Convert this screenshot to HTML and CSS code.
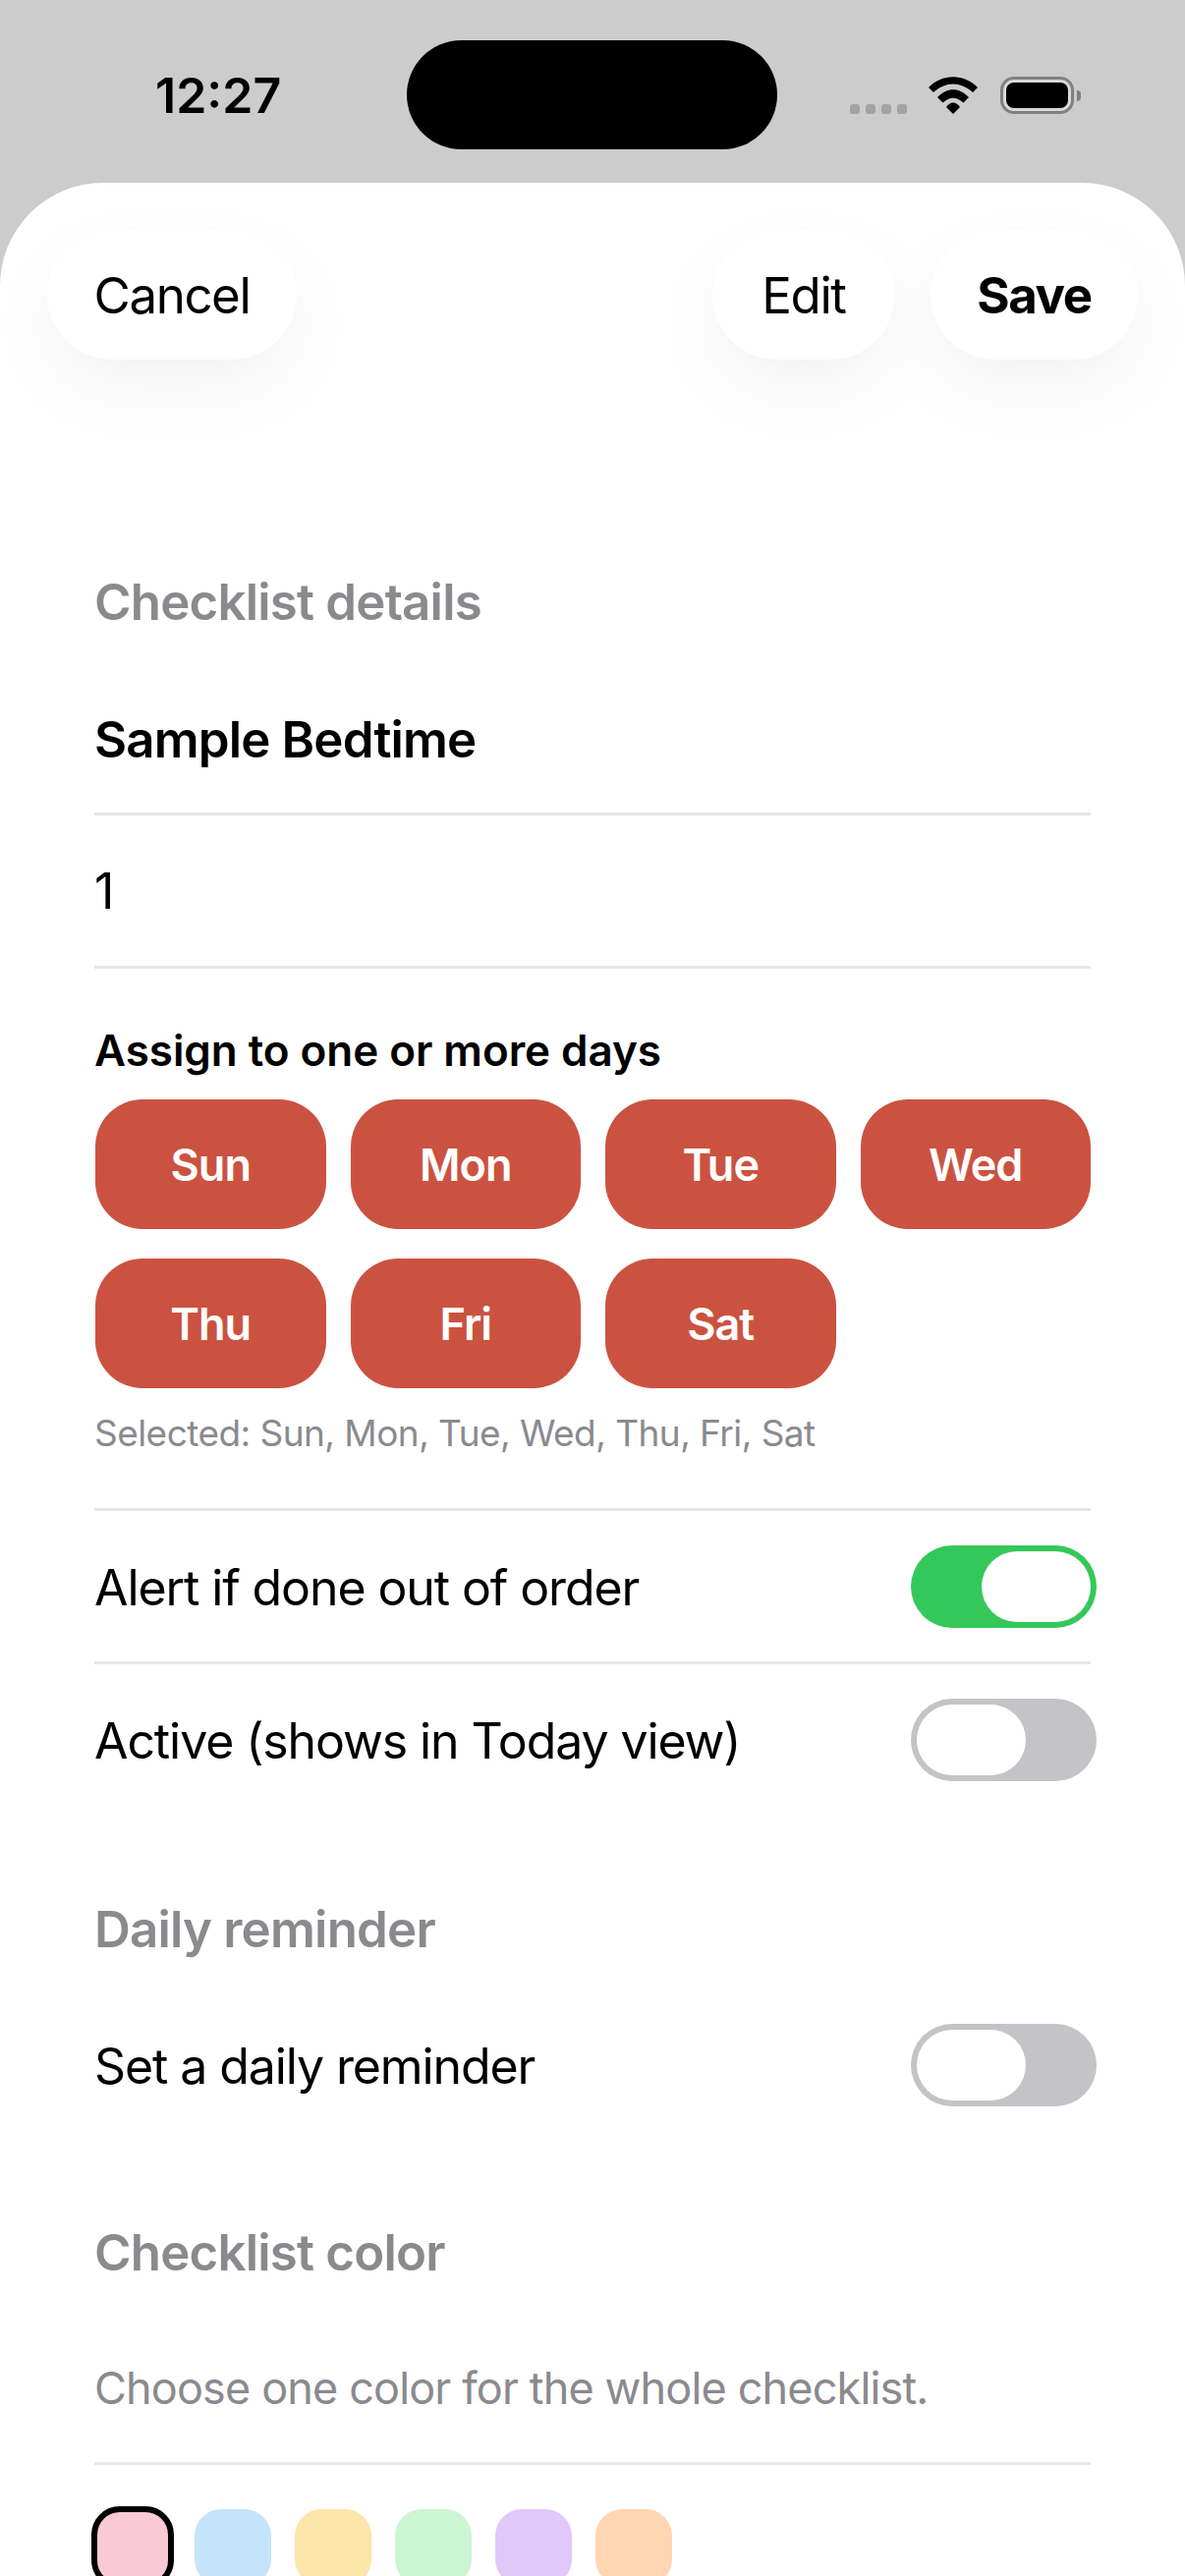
FILE: index.html
```html
<!DOCTYPE html>
<html lang="en">
<head>
    <meta charset="UTF-8">
    <meta name="viewport" content="width=device-width, initial-scale=1.0">
    <title>Checklist details</title>
    <link rel="stylesheet" href="styles.css">
</head>
<body>
    <header class="status">
        <span class="time">12:27</span>
        <div class="island"></div>
        <div class="status-icons">
            <div class="signal"><i></i><i></i><i></i><i></i></div>
            <svg class="wifi" width="50" height="38" viewBox="0 0 50 38">
                <path d="M0 11C14-3.5 36-3.5 50 11L45 16C32 4.500 18 4.500 5 16Z"/>
                <path d="M9 21C19 10.500 31 10.500 41 21L35.500 26.500C28 20 22 20 14.500 26.500Z"/>
                <path d="M18 31C22 25 28 25 32 31L25 38Z"/>
            </svg>
            <div class="battery"><div class="battery-fill"></div></div>
            <div class="battery-nub"></div>
        </div>
    </header>

    <main class="sheet">
        <nav class="toolbar">
            <a class="pill pill-cancel">Cancel</a>
            <a class="pill pill-edit">Edit</a>
            <a class="pill pill-save">Save</a>
        </nav>

        <div class="content">
            <h2 class="section-title first">Checklist details</h2>
            <div class="row row-name">Sample Bedtime</div>
            <div class="row">1</div>

            <h3 class="days-label">Assign to one or more days</h3>
            <div class="days">
                <button class="day">Sun</button>
                <button class="day">Mon</button>
                <button class="day">Tue</button>
                <button class="day">Wed</button>
                <button class="day">Thu</button>
                <button class="day">Fri</button>
                <button class="day">Sat</button>
            </div>
            <p class="days-note">Selected: Sun, Mon, Tue, Wed, Thu, Fri, Sat</p>

            <div class="row row-toggle">
                <span class="row-text">Alert if done out of order</span>
                <div class="toggle on"><div class="knob"></div></div>
            </div>
            <div class="row row-toggle row-last">
                <span class="row-text">Active (shows in Today view)</span>
                <div class="toggle"><div class="knob"></div></div>
            </div>

            <h2 class="section-title">Daily reminder</h2>
            <div class="row row-toggle row-last row-reminder">
                <span class="row-text">Set a daily reminder</span>
                <div class="toggle"><div class="knob"></div></div>
            </div>

            <h2 class="section-title section-color">Checklist color</h2>
            <div class="row row-hint">Choose one color for the whole checklist.</div>

            <div class="swatches">
                <div class="swatch selected pink"></div>
                <div class="swatch blue"></div>
                <div class="swatch yellow"></div>
                <div class="swatch green"></div>
                <div class="swatch purple"></div>
                <div class="swatch orange"></div>
            </div>
        </div>
    </main>
</body>
</html>
```
FILE: styles.css
```css
* {
    margin: 0;
    padding: 0;
    box-sizing: border-box;
}

html, body {
    height: 2622px;
    overflow: hidden;
}

body {
    background: #cccccc;
    font-family: Inter, "Noto Sans", sans-serif;
    color: #000;
}

/* status bar */
.status {
    height: 186px;
    display: flex;
    align-items: flex-start;
    padding: 41px 0 0 158px;
}

.time {
    width: 256px;
    margin-top: 28px;
    font-size: 50px;
    line-height: 56px;
    font-weight: 600;
}

.island {
    width: 377px;
    height: 111px;
    background: #000;
    border-radius: 56px;
}

.status-icons {
    margin-top: 37px;
    margin-left: 74px;
    height: 38px;
    display: flex;
    align-items: flex-end;
}

.signal {
    display: flex;
    gap: 6px;
}

.signal i {
    width: 10px;
    height: 10px;
    border-radius: 3px;
    background: #a3a3a3;
}

.wifi {
    margin-left: 22px;
}

.battery {
    margin-left: 23px;
    width: 75px;
    height: 38px;
    padding: 3px;
    border: 3px solid #808080;
    border-radius: 14px;
    background: #d9d9d9;
}

.battery-fill {
    height: 100%;
    background: #000;
    border-radius: 8px;
}

.battery-nub {
    width: 4px;
    height: 11px;
    margin: 0 0 13px 3px;
    background: #808080;
    border-radius: 0 4px 4px 0;
}

/* sheet */
.sheet {
    height: 2436px;
    background: #fff;
    border-radius: 105px 105px 0 0;
    overflow: hidden;
}

.toolbar {
    display: flex;
    gap: 36px;
    padding: 48px 48px 0;
}

.pill {
    height: 132px;
    display: flex;
    align-items: center;
    justify-content: center;
    background: #fff;
    border-radius: 66px;
    font-size: 51px;
    letter-spacing: -1.4px;
    box-shadow: 0 30px 70px rgba(0, 0, 0, 0.05);
}

.pill-cancel {
    width: 254px;
}

.pill-edit {
    width: 186px;
    margin-left: auto;
}

.pill-save {
    width: 211px;
    font-weight: 700;
}

.content {
    padding: 0 96px;
}

.section-title {
    margin-top: 84px;
    font-size: 51px;
    line-height: 60px;
    font-weight: 600;
    letter-spacing: -0.8px;
    color: #8a8a8e;
}

.section-title.first {
    margin-top: 217px;
}

.section-title.section-color {
    margin-top: 82px;
}

.row {
    height: 156px;
    display: flex;
    align-items: center;
    border-bottom: 3px solid #e5e5ea;
    font-size: 50px;
    letter-spacing: -1.1px;
}

.row-text {
    padding-top: 3px;
}

.row-name {
    margin-top: 31px;
    padding-top: 3px;
    font-size: 51px;
    font-weight: 600;
    letter-spacing: -0.85px;
}

.row-toggle {
    justify-content: space-between;
}

.row-last {
    border-bottom-color: transparent;
}

.row-reminder {
    margin-top: 31px;
}

.row-hint {
    margin-top: 31px;
    height: 155px;
    color: #8a8a8e;
    font-size: 45px;
    letter-spacing: -0.85px;
}

.days-label {
    margin-top: 56px;
    font-size: 44px;
    line-height: 54px;
    font-weight: 600;
    letter-spacing: -0.05px;
}

.days {
    margin: 23px 0 0 1px;
    display: grid;
    grid-template-columns: repeat(4, 1fr);
    gap: 30px 25px;
}

.day {
    height: 132px;
    border: none;
    border-radius: 48px;
    background: #cb5240;
    color: #fff;
    font-family: inherit;
    font-size: 45px;
    font-weight: 600;
    letter-spacing: -1px;
}

.days-note {
    margin-top: 23px;
    height: 102px;
    padding-top: 1px;
    border-bottom: 3px solid #e5e5ea;
    font-size: 37px;
    line-height: 44px;
    letter-spacing: -0.55px;
    color: #8a8a8e;
}

/* toggles */
.toggle {
    width: 189px;
    height: 84px;
    margin-right: -6px;
    padding: 6px;
    border-radius: 42px;
    background: #c4c4c6;
    display: flex;
}

.toggle.on {
    background: #34c85a;
    justify-content: flex-end;
}

.knob {
    width: 111px;
    height: 72px;
    border-radius: 36px;
    background: #fff;
}

/* colours */
.swatches {
    margin-top: 45px;
    display: flex;
    gap: 24px;
    align-items: flex-start;
}

.swatch {
    width: 78px;
    height: 78px;
    border-radius: 27px;
}

.swatch.selected {
    width: 84px;
    height: 84px;
    margin: -3px -3px 0 -3px;
    border: 6px solid #000;
    border-radius: 29px;
}

.pink { background: #f9c9d6; }
.blue { background: #c5e3fa; }
.yellow { background: #fee6aa; }
.green { background: #ccf6d1; }
.purple { background: #e0c8f9; }
.orange { background: #ffd5b2; }
```
